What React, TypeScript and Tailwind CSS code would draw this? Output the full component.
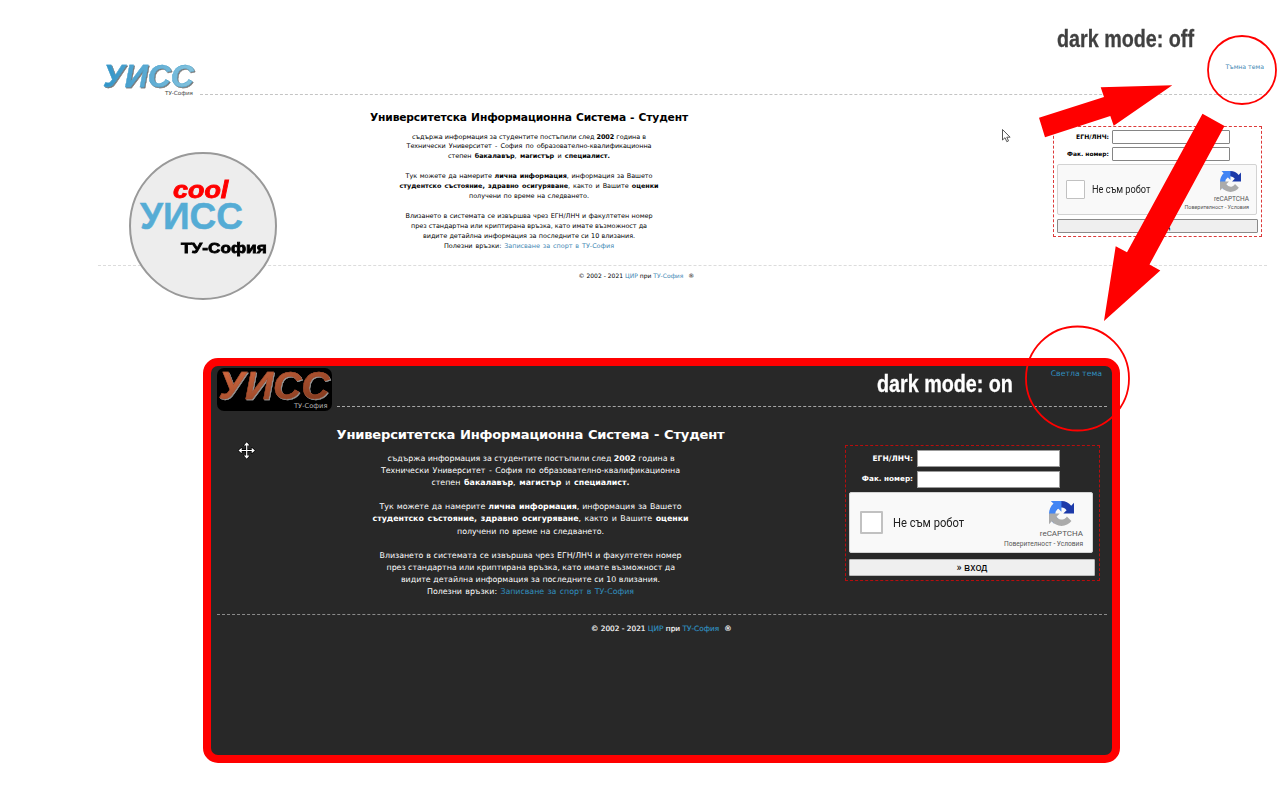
import type { ReactNode } from "react";
import { clsx } from "clsx";

type Mode = "light" | "dark";

const LINES: { text?: ReactNode; light: string; dark: string }[] = [
  { text: <>съдържа информация за студентите постъпили след <b>2002</b> година в</>, light: "w-[234px]", dark: "w-[286px]" },
  { text: "Технически Университет - София по образователно-квалификационна", light: "w-[245px]", dark: "w-[299px]" },
  { text: <>степен <b>бакалавър</b>, <b>магистър</b> и <b>специалист.</b></>, light: "w-[162px]", dark: "w-[198px]" },
  { light: "", dark: "" },
  { text: <>Тук можете да намерите <b>лична информация</b>, информация за Вашето</>, light: "w-[247px]", dark: "w-[302px]" },
  { text: <><b>студентско състояние, здравно осигуряване</b>, както и Вашите <b>оценки</b></>, light: "w-[259px]", dark: "w-[316px]" },
  { text: "получени по време на следването.", light: "w-[120px]", dark: "w-[147px]" },
  { light: "", dark: "" },
  { text: "Влизането в системата се извършва чрез ЕГН/ЛНЧ и факултетен номер", light: "w-[247px]", dark: "w-[302px]" },
  { text: "през стандартна или криптирана връзка, като имате възможност да", light: "w-[236px]", dark: "w-[288px]" },
  { text: "видите детайлна информация за последните си 10 влизания.", light: "w-[212px]", dark: "w-[259px]" },
];

const linkColor = { light: "text-[#3f88b3]", dark: "text-[#3190c0]" };

function Article({ mode }: { mode: Mode }) {
  const dark = mode === "dark";
  return (
    <article className={clsx("flex shrink-0 flex-col items-center whitespace-nowrap", dark ? "w-[390px] pt-[19px]" : "w-[320px] pt-[15px]")}>
      <h1 className={clsx("font-bold [text-align-last:justify]", dark ? "w-[388px] text-[13.1px] leading-[18px] tracking-[-0.2px]" : "w-[318px] text-[10.7px] leading-4 tracking-[-0.15px]")}>
        Университетска Информационна Система - Студент
      </h1>
      <div className={clsx("flex flex-col items-center", dark ? "mt-[9px] text-[7.9px] leading-[12.1px] tracking-[-0.03px]" : "mt-[6.5px] text-[6.45px] leading-[9.93px] tracking-[-0.03px]")}>
        {LINES.map((line, i) => (
          <p key={i} className={clsx("[text-align-last:justify]", dark ? "h-[12.1px]" : "h-[9.93px]", line[mode])}>
            {line.text}
          </p>
        ))}
        <p className={clsx("[text-align-last:justify]", dark ? "w-[207px]" : "w-[170px]")}>
          <span>Полезни връзки:</span> <a className={linkColor[mode]}>Записване за спорт в ТУ-София</a>
        </p>
      </div>
    </article>
  );
}

function RecaptchaIcon({ className }: { className: string }) {
  return (
    <svg viewBox="0 0 64 64" className={className}>
      <path fill="#1c3aa9" d="M64 31.955l-.033-1.37V4.687l-7.16 7.16C50.948 4.674 42.033.093 32.05.093c-10.4 0-19.622 4.96-25.458 12.64l11.736 11.86a15.55 15.55 0 0 1 4.754-5.334c2.05-1.6 4.952-2.906 8.968-2.906.485 0 .86.057 1.135.163 4.976.393 9.288 3.14 11.828 7.124l-8.307 8.307L64 31.953" />
      <path fill="#4285f4" d="M31.862.094l-1.37.033H4.594l7.16 7.16C4.58 13.147 0 22.06 0 32.046c0 10.4 4.96 19.622 12.64 25.458L24.5 45.768a15.55 15.55 0 0 1-5.334-4.754c-1.6-2.05-2.906-4.952-2.906-8.968 0-.485.057-.86.163-1.135.393-4.976 3.14-9.288 7.124-11.828l8.307 8.307L31.86.095" />
      <path fill="#ababab" d="M.001 32.045l.033 1.37v25.898l7.16-7.16c5.86 7.173 14.774 11.754 24.76 11.754 10.4 0 19.622-4.96 25.458-12.64l-11.736-11.86a15.55 15.55 0 0 1-4.754 5.334c-2.05 1.6-4.952 2.906-8.968 2.906-.485 0-.86-.057-1.135-.163-4.976-.393-9.288-3.14-11.828-7.124l8.307-8.307c-10.522.04-22.4.066-27.295-.005" />
    </svg>
  );
}

function Field({ mode, label, labelClass }: { mode: Mode; label: string; labelClass: string }) {
  const dark = mode === "dark";
  return (
    <label className={clsx("flex items-center", dark ? "h-[17px] gap-1" : "h-[14px] gap-[3px]")}>
      <span className={clsx("text-right font-bold whitespace-nowrap", dark ? "w-[64px]" : "w-[52px]", labelClass)}>{label}</span>
      <span className={clsx("h-full border bg-white", dark ? "w-[143px] border-[#999]" : "w-[118px] rounded-[1px] border-[#858585]")} />
    </label>
  );
}

function LoginForm({ mode }: { mode: Mode }) {
  const dark = mode === "dark";
  return (
    <form
      className={clsx(
        "flex shrink-0 flex-col border border-dashed",
        dark ? "mt-[38px] ml-[119.5px] h-[136px] w-[255px] gap-1 border-[#b80d0d] pl-[3px] pt-1" : "mt-[31px] ml-[364px] h-[111px] w-[209px] gap-[3px] border-[#dc3a3a] px-[3px] pt-[3px]",
      )}
    >
      <Field mode={mode} label="ЕГН/ЛНЧ:" labelClass={dark ? "text-[7.5px]" : "text-[6.1px]"} />
      <Field mode={mode} label="Фак. номер:" labelClass={dark ? "text-[7.25px]" : "text-[5.95px]"} />
      <div
        className={clsx(
          "flex shrink-0 items-center rounded-[2px] border border-[#d3d3d3] bg-[#f9f9f9] [font-family:Roboto,sans-serif] text-[#222]",
          dark ? "h-[61px] w-[244px] pr-[9px] pl-[10px]" : "h-[51px] w-[200px] pr-[7px] pl-[7.5px]",
        )}
      >
        <span className={clsx("shrink-0 rounded-[1px] border-[#c1c1c1] bg-white", dark ? "size-[23px] border-2" : "size-[19px] border-[1.5px]")} />
        <span className={clsx("origin-left scale-x-[0.92] whitespace-nowrap", dark ? "ml-[9.5px] pt-px text-[12.2px]" : "ml-[7.500px] text-[10px]")}>Не съм робот</span>
        <div className="ml-auto flex flex-col items-end whitespace-nowrap text-[#555]">
          <RecaptchaIcon className={dark ? "mt-[5px] mr-[9px] size-[25px]" : "mt-[4px] mr-[8px] size-[21px]"} />
          <span className={dark ? "mt-[3px] text-[8px] leading-[10px]" : "mt-[3px] text-[6.5px] leading-[8px]"}>reCAPTCHA</span>
          <span className={dark ? "text-[6.6px] leading-[10px]" : "text-[5.4px] leading-[9px]"}>Поверителност - Условия</span>
        </div>
      </div>
      <button
        type="button"
        className={clsx(
          "shrink-0 rounded-[1px] border bg-[#efefef] [font-family:Roboto,sans-serif] text-black",
          dark ? "mt-[2px] h-[17px] w-[246px] border-[#bbb] text-[10.7px] leading-[15px]" : "mt-px h-[14px] w-[201px] border-[#8a8a8a] text-[8.7px] leading-3",
        )}
      >
        » вход
      </button>
    </form>
  );
}

function Footer({ mode }: { mode: Mode }) {
  const dark = mode === "dark";
  return (
    <footer className={clsx("flex items-center whitespace-nowrap", dark ? "h-[27px] gap-[5px] pl-[374px] text-[7.36px] [-webkit-text-stroke:0.15px]" : "h-[20px] gap-[5px] pl-[480.5px] text-[6.03px]")}>
      <span>
        © 2002 - 2021 <a className={linkColor[mode]}>ЦИР</a> при <a className={linkColor[mode]}>ТУ-София</a>
      </span>
      <span>®</span>
    </footer>
  );
}

function LightPage() {
  return (
    <section className="flex h-[358px] flex-col pr-[13px] pl-[98px] text-black">
      <header className="flex h-[95px] shrink-0">
        <div className="flex w-[102px] shrink-0 flex-col pt-[60px] pl-[5px]">
          <span className="w-[94px] bg-linear-to-r from-[#2f94c8] to-[#86c5df] bg-clip-text [font-family:Liberation_Sans,Arial,sans-serif] text-[32px] leading-8 font-bold text-transparent italic drop-shadow-[1px_1px_0.4px_#777] [-webkit-text-stroke:0.3px_#4ba3cf]">УИСС</span>
          <span className="-mt-[3px] pl-[62px] text-[5.6px] leading-2 text-[#444]">ТУ-София</span>
        </div>
        <div className="flex-1 border-b border-dashed border-[#c4c4c4] pt-[62px] pr-[3px] text-right">
          <a className={clsx("block text-[6.2px] leading-[10px]", linkColor.light)}>Тъмна тема</a>
        </div>
      </header>
      <main className="flex h-[171px] shrink-0 border-b border-dashed border-[#dcdcdc] pl-[271px]">
        <Article mode="light" />
        <LoginForm mode="light" />
      </main>
      <Footer mode="light" />
    </section>
  );
}

function DarkPage() {
  return (
    <section className="ml-[203px] flex h-[405px] w-[917px] flex-col rounded-[15px] border-8 border-[#f00] bg-[#282828] pr-[5px] pl-[6px] text-white">
      <header className="flex h-[41px] shrink-0">
        <div className="mt-[2px] mr-[5px] flex h-[43px] w-[115px] shrink-0 flex-col rounded-[7px] bg-black pl-[1.5px]">
          <span className="-mt-px w-[113px] bg-linear-to-br from-[#da6d43] to-[#783319] bg-clip-text [font-family:Liberation_Sans,Arial,sans-serif] text-[39px] leading-[38px] font-bold text-transparent italic drop-shadow-[1px_1px_0.4px_#999] [-webkit-text-stroke:0.4px_#9b4a2c]">УИСС</span>
          <span className="-mt-[3px] pl-[75.5px] text-[6.7px] leading-2 text-[#b5b5b5]">ТУ-София</span>
        </div>
        <div className="flex-1 border-b border-dashed border-[#a5a5a5] pt-[3px] pr-[5px] text-right">
          <a className={clsx("block text-[7.75px] leading-[10px]", linkColor.dark)}>Светла тема</a>
        </div>
      </header>
      <main className="flex h-[208px] shrink-0 border-b border-dashed border-[#8a8a8a] pl-[118.5px]">
        <Article mode="dark" />
        <LoginForm mode="dark" />
      </main>
      <Footer mode="dark" />
    </section>
  );
}

function Badge() {
  return (
    <div className="absolute top-[152px] left-[129px] flex size-[148px] flex-col items-start rounded-full border-[2.5px] border-[#999] bg-[#ededed] pt-[26px] [font-family:Liberation_Sans,Arial,sans-serif] font-bold whitespace-nowrap">
      <span className="ml-[42px] origin-left scale-x-[1.17] text-[23px] leading-5 text-[#f00] italic [-webkit-text-stroke:0.8px_#f00]">cool</span>
      <span className="ml-[9px] text-[37px] leading-[34px] text-[#55acd5] [-webkit-text-stroke:0.5px_#55acd5]">УИСС</span>
      <span className="mt-[6px] ml-[50px] origin-left scale-x-[1.15] text-[15px] leading-4 text-black [-webkit-text-stroke:0.8px_#000]">ТУ-София</span>
    </div>
  );
}

function Annotations() {
  return (
    <>
      <span className="absolute top-[25px] left-[1057px] origin-left scale-x-[0.822] [font-family:Liberation_Sans,Arial,sans-serif] text-[24px] leading-7 font-bold whitespace-nowrap text-[#404040] [-webkit-text-stroke:0.3px_#404040]">dark mode: off</span>
      <span className="absolute top-[370px] left-[877px] origin-left scale-x-[0.822] [font-family:Liberation_Sans,Arial,sans-serif] text-[24px] leading-7 font-bold whitespace-nowrap text-white [-webkit-text-stroke:0.3px_#fff]">dark mode: on</span>
      <svg className="absolute inset-0 h-[800px] w-[1280px]" viewBox="0 0 1280 800">
        <g fill="none" stroke="#f00" strokeWidth="1.8">
          <circle cx="1242" cy="70" r="34" />
          <ellipse cx="1077.5" cy="378.5" rx="51.5" ry="52" />
        </g>
        <g fill="#f00">
          <path d="M1172.3 85.3 1113.7 125.7 1110.3 116 1045 137.3 1039 117.7 1104 97 1100.7 87.3Z" />
          <path d="M1202.5 113.7 1224.5 126 1149.5 264.5 1160.3 270.5 1104 321 1115.7 246.3 1127 252.3Z" />
        </g>
        <path d="M1002.5 129.500v10.500l2.500-2.300 1.800 4 1.700-.8-1.700-3.700h3.300z" fill="#fff" stroke="#444" strokeWidth="0.9" />
        <g transform="translate(246.700 450.500)" stroke="#000" strokeWidth="1.2" strokeLinejoin="round" fill="#fff" paintOrder="stroke">
          <path d="M-.6-.6v-4.400h-2.200l2.800-3.200 2.800 3.200h-2.200v4.400h4.400v-2.200l3.200 2.800-3.200 2.800v-2.200h-4.400v4.400h2.200l-2.800 3.200-2.800-3.200h2.200v-4.400h-4.400v2.200l-3.200-2.800 3.200-2.800v2.200z" />
        </g>
      </svg>
    </>
  );
}

export default function App() {
  return (
    <div className="relative h-[800px] w-[1280px] overflow-hidden bg-white [font-family:DejaVu_Sans,Verdana,sans-serif]">
      <LightPage />
      <DarkPage />
      <Badge />
      <Annotations />
    </div>
  );
}
